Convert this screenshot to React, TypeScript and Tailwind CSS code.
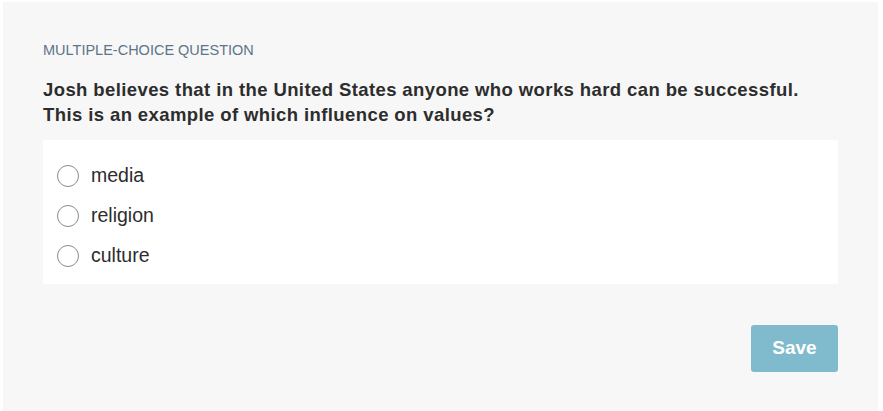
import { useState } from 'react';

const options = ['media', 'religion', 'culture'];

export default function App() {
  const [selected, setSelected] = useState<string | null>(null);

  return (
    <div className="min-h-screen bg-white pl-[3px] pr-[5px] pt-[2px] font-['Liberation_Sans',Arial,sans-serif]">
      <div className="min-h-[409px] bg-[#f7f7f7] px-10 pt-[39px] pb-[39px]">
        {/* Label */}
        <div className="text-[14.5px] leading-[18px] text-[#5e7489]">MULTIPLE-CHOICE QUESTION</div>

        {/* Question */}
        <p className="mt-[18px] text-[18.5px] leading-[25px] font-bold tracking-[0.4px] text-[#2d2d2d]">
          Josh believes that in the United States anyone who works hard can be successful.
          <br />
          This is an example of which influence on values?
        </p>

        {/* Options */}
        <div className="mt-[13px] bg-white pt-[16px] pb-[8px]">
          {options.map((opt) => (
            <label key={opt} className="flex h-10 cursor-pointer items-center pl-[14px]">
              <span
                className="flex h-[22px] w-[22px] items-center justify-center rounded-full border border-[#8a8a8a] bg-white"
                onClick={() => setSelected(opt)}
              >
                {selected === opt && <span className="h-3 w-3 rounded-full bg-[#7fbacd]" />}
              </span>
              <span className="ml-[12px] text-[19.5px] text-[#2d2d2d]">{opt}</span>
            </label>
          ))}
        </div>

        {/* Save */}
        <div className="mt-[41px] flex justify-end">
          <button className="h-[47px] w-[87px] rounded-[3px] bg-[#7fbacd] text-[19px] font-bold text-white">
            Save
          </button>
        </div>
      </div>
    </div>
  );
}
